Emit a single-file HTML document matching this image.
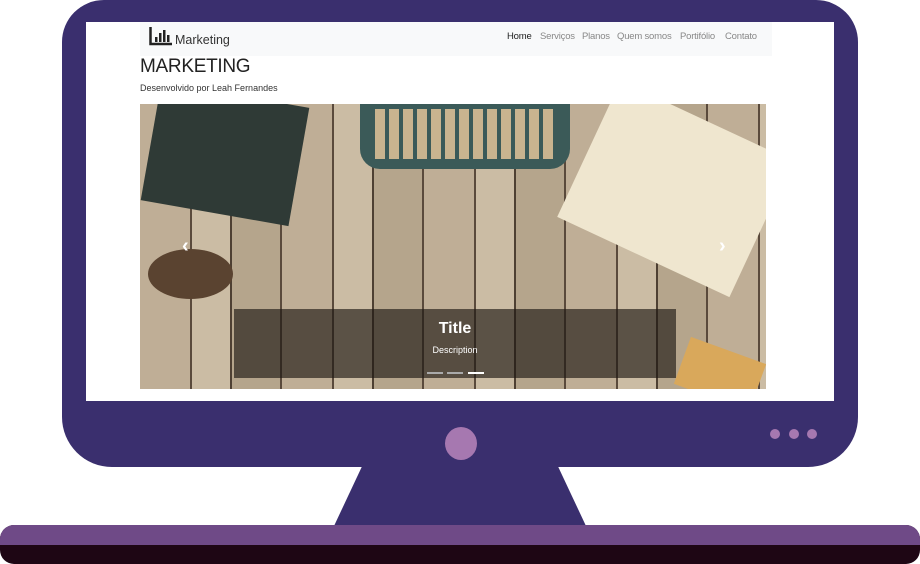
<!DOCTYPE html>
<html><head><meta charset="utf-8"><style>
*{margin:0;padding:0;box-sizing:border-box}
body{width:920px;height:564px;background:#fff;position:relative;overflow:hidden;font-family:"Liberation Sans",sans-serif}
.a{position:absolute}
.n{position:absolute;top:31px;font-size:9.5px;color:#888;white-space:nowrap;letter-spacing:-0.2px}
</style></head><body>
<div class="a" style="left:62px;top:0;width:796px;height:467px;background:#3a2f6e;border-radius:42px 42px 50px 50px"></div>
<div class="a" style="left:86px;top:22px;width:748px;height:379px;background:#fff"></div>
<svg class="a" style="left:0;top:460px" width="920" height="104"><polygon points="365,0 555,0 586,66 334,66" fill="#3a2f6e"/></svg>
<div class="a" style="left:0;top:525px;width:920px;height:39px;border-radius:14px;background:#1e0614;overflow:hidden"><div style="height:20px;background:#6f4a87"></div></div>
<div class="a" style="left:445px;top:427px;width:32px;height:33px;border-radius:50%;background:#a678b0"></div>
<div class="a" style="left:770px;top:429px;width:10px;height:10px;border-radius:50%;background:#a678b0"></div>
<div class="a" style="left:789px;top:429px;width:10px;height:10px;border-radius:50%;background:#a678b0"></div>
<div class="a" style="left:807px;top:429px;width:10px;height:10px;border-radius:50%;background:#a678b0"></div>

<div class="a" style="left:140px;top:22px;width:632px;height:34px;background:#f8f9fa"></div>
<svg class="a" style="left:149px;top:26px" width="24" height="20"><path d="M1.5 1V18H23" stroke="#222" stroke-width="2.5" fill="none"/><rect x="6" y="11" width="2.5" height="5" fill="#222"/><rect x="10" y="7" width="2.5" height="9" fill="#222"/><rect x="14" y="4" width="2.5" height="12" fill="#222"/><rect x="18" y="9" width="2.5" height="7" fill="#222"/></svg>
<div class="a" style="left:175px;top:33px;font-size:12.5px;color:#333">Marketing</div>
<div class="n" style="left:507px;color:#222">Home</div>
<div class="n" style="left:540px">Serviços</div>
<div class="n" style="left:582px">Planos</div>
<div class="n" style="left:617px">Quem somos</div>
<div class="n" style="left:680px">Portifólio</div>
<div class="n" style="left:725px">Contato</div>
<div class="a" style="left:140px;top:56px;font-size:19px;color:#222;letter-spacing:-0.3px">MARKETING</div>
<div class="a" style="left:140px;top:83px;font-size:9px;color:#333">Desenvolvido por Leah Fernandes</div>

<div class="a" style="left:140px;top:104px;width:626px;height:285px;overflow:hidden;background:repeating-linear-gradient(90deg,#bfae96 0 50px,#5a4a3c 50px 52px,#cbbca4 52px 90px,#4e4033 90px 92px,#b5a58c 92px 140px,#5a4a3c 140px 142px);">
 <div class="a" style="left:10px;top:-10px;width:150px;height:120px;background:#2f3a36;transform:rotate(10deg)"></div>
 <div class="a" style="left:220px;top:-20px;width:210px;height:85px;background:#3b5a58;border-radius:0 0 20px 20px"></div>
 <div class="a" style="left:235px;top:5px;width:180px;height:50px;background:repeating-linear-gradient(90deg,#c9b48f 0 10px,#3b5a58 10px 14px)"></div>
 <div class="a" style="left:440px;top:10px;width:190px;height:150px;background:#efe6cf;transform:rotate(25deg)"></div>
 <div class="a" style="left:8px;top:145px;width:85px;height:50px;border-radius:50%;background:#5a4330"></div>
 <div class="a" style="left:540px;top:245px;width:80px;height:50px;background:#d9a85b;transform:rotate(20deg)"></div>
 <div class="a" style="left:94px;top:205px;width:442px;height:69px;background:rgba(30,25,20,.65)"></div>
 <div class="a" style="left:94px;top:216px;width:442px;text-align:center;color:#fff;font-size:16px;font-weight:bold">Title</div>
 <div class="a" style="left:94px;top:241px;width:442px;text-align:center;color:#fff;font-size:9px">Description</div>
 <div class="a" style="left:287px;top:268px;width:16px;height:2px;background:#aaa"></div>
 <div class="a" style="left:307px;top:268px;width:16px;height:2px;background:#aaa"></div>
 <div class="a" style="left:328px;top:268px;width:16px;height:2px;background:#fff"></div>
 <div class="a" style="left:42px;top:132px;color:#fff;font-size:20px;font-weight:bold;line-height:20px">‹</div>
 <div class="a" style="left:579px;top:132px;color:#fff;font-size:20px;font-weight:bold;line-height:20px">›</div>
</div>
</body></html>
